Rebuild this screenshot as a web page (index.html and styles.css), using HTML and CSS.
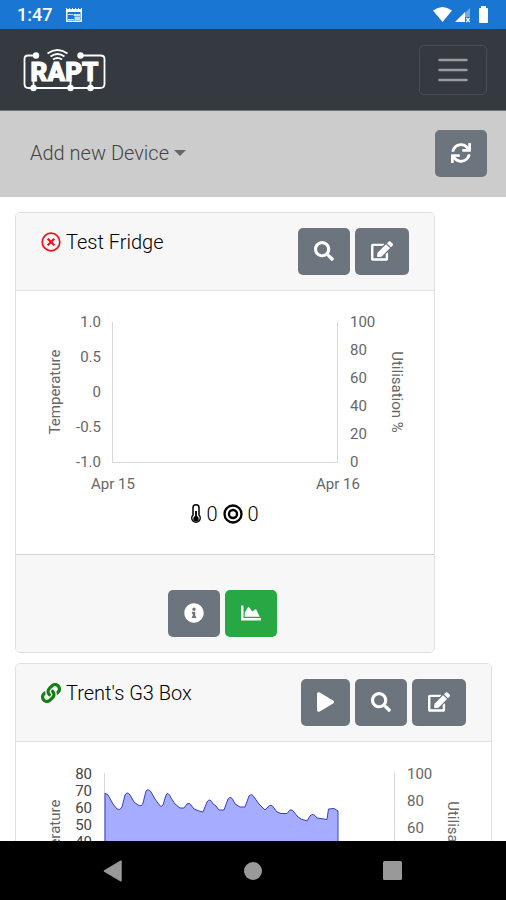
FILE: index.html
```html
<!DOCTYPE html>
<html lang="en">
<head>
<meta charset="utf-8">
<meta name="viewport" content="width=device-width, initial-scale=1">
<title>RAPT</title>
<link rel="stylesheet" href="styles.css">
</head>
<body>
<svg class="sprite" aria-hidden="true">
  <symbol id="search" viewBox="0 0 512 512"><path d="M505 442.7L405.3 343c-4.5-4.5-10.6-7-17-7H372c27.6-35.3 44-79.7 44-128C416 93.1 322.9 0 208 0S0 93.1 0 208s93.1 208 208 208c48.3 0 92.7-16.4 128-44v16.3c0 6.4 2.5 12.5 7 17l99.7 99.7c9.4 9.4 24.6 9.4 33.9 0l28.3-28.3c9.4-9.4 9.4-24.6.1-34zM208 336c-70.7 0-128-57.2-128-128 0-70.7 57.2-128 128-128 70.7 0 128 57.2 128 128 0 70.7-57.2 128-128 128z"/></symbol>
  <symbol id="edit" viewBox="0 0 576 512"><path d="M402.6 83.2l90.2 90.2c3.8 3.8 3.8 10 0 13.8L274.4 405.6l-92.8 10.3c-12.4 1.4-22.9-9.1-21.5-21.5l10.3-92.8L388.8 83.2c3.8-3.8 10-3.8 13.8 0zm162-22.9l-48.8-48.8c-15.2-15.2-39.9-15.2-55.2 0l-35.4 35.4c-3.8 3.8-3.8 10 0 13.8l90.2 90.2c3.8 3.8 10 3.8 13.8 0l35.4-35.4c15.2-15.3 15.2-40 0-55.2zM384 346.2V448H64V128h229.8c3.2 0 6.2-1.3 8.5-3.5l40-40c7.6-7.6 2.2-20.5-8.5-20.5H48C21.5 64 0 85.5 0 112v352c0 26.5 21.5 48 48 48h352c26.5 0 48-21.5 48-48V306.2c0-10.7-12.9-16-20.5-8.5l-40 40c-2.2 2.3-3.5 5.3-3.5 8.5z"/></symbol>
</svg>

<div class="status-bar">
  <span class="clock">1:47</span>
  <svg class="calendar" width="16" height="14" viewBox="0 0 16 14" aria-hidden="true">
    <path fill="#fff" fill-rule="evenodd" d="M0 0h1v1h2V0h1v1h2V0h1v1h2V0h1v1h2V0h1v1h2V0h1v14H0zM1.500 4v8.500h13V4z"/>
    <path fill="#c5dcf6" d="M7.500 6H14v2H7.500zM8.500 8.500H14V12H8.500zM2 6h5v1H2zM2 11h6v1H2z"/>
  </svg>
  <svg class="signals" width="56" height="18" viewBox="0 0 56 18" aria-hidden="true">
    <path fill="#fff" d="M0 4.500Q9.500-2.500 19 4.500L9.500 16z"/>
    <path fill="#73abe6" d="M37 2v9h-5V7z"/>
    <path fill="#fff" d="M22 16L32 6v10z"/>
    <path stroke="#fff" stroke-width="1.300" d="M33.300 12l3.400 4M36.700 12l-3.400 4"/>
    <path fill="#fff" d="M48 0h5v2h1q1 0 1 1v13q0 1-1 1h-7q-1 0-1-1V3q0-1 1-1h1z"/>
  </svg>
</div>

<div class="page">
  <header class="navbar">
    <a class="brand" href="#" aria-label="RAPT home">
      <svg width="84" height="46" viewBox="22 47 84 46">
        <g fill="none" stroke="#fff" stroke-width="1.800">
          <path d="M35 55.500H28q-3.500 0-3.500 3.500V84q0 4 4 4h71.500q4.500 0 4.500-4V59q0-3.500-4-3.500H81"/>
          <path d="M33.500 80v8M70.500 80v8M90.500 80v8"/>
          <path d="M47.500 53.500q10-7 20 0M50.500 56.500q7-5 14 0M53 59.500q4.500-3 9 0"/>
        </g>
        <g fill="#fff">
          <circle cx="36" cy="55.500" r="3.200"/><circle cx="80.500" cy="55.500" r="3.200"/>
          <circle cx="33.500" cy="88" r="3.200"/><circle cx="70.500" cy="88" r="3.200"/><circle cx="90.500" cy="88" r="3.200"/>
          <text class="wordmark" x="64.500" y="81">RAPT</text>
        </g>
      </svg>
    </a>
    <button class="toggler" type="button" aria-label="Toggle navigation">
      <svg width="30" height="24" viewBox="0 0 30 24"><path stroke="#9a9da0" stroke-width="2.400" stroke-linecap="round" d="M1.500 2h27M1.500 12h27M1.500 22h27"/></svg>
    </button>
  </header>

  <div class="toolbar">
    <button class="dropdown" type="button">Add new Device<span class="caret"></span></button>
    <button class="btn" type="button" aria-label="Refresh">
      <svg width="20" height="20" viewBox="0 0 512 512"><path d="M440.650 12.570l4 82.770A247.160 247.160 0 0 0 255.830 8C134.730 8 33.910 94.920 12.290 209.820A12 12 0 0 0 24.090 224h49.050a12 12 0 0 0 11.670-9.260 175.910 175.910 0 0 1 317-56.940l-101.460-4.860a12 12 0 0 0-12.570 12v47.410a12 12 0 0 0 12 12H500a12 12 0 0 0 12-12V12a12 12 0 0 0-12-12h-47.370a12 12 0 0 0-11.980 12.570zM255.830 432a175.610 175.610 0 0 1-146-77.800l101.800 4.870a12 12 0 0 0 12.570-12v-47.400a12 12 0 0 0-12-12H12a12 12 0 0 0-12 12V500a12 12 0 0 0 12 12h47.350a12 12 0 0 0 12-12.600l-4.150-82.570A247.170 247.170 0 0 0 255.830 504c121.110 0 221.930-86.920 243.550-201.820a12 12 0 0 0-11.800-14.180h-49.050a12 12 0 0 0-11.670 9.260A175.860 175.860 0 0 1 255.830 432z"/></svg>
    </button>
  </div>

  <main class="devices">
    <section class="card card-fit">
      <header class="card-header">
        <h2 class="title">
          <svg width="20" height="20" viewBox="0 0 20 20" fill="none" stroke="#f01018" aria-hidden="true"><circle cx="10" cy="10" r="8.800" stroke-width="1.700"/><path stroke-width="2.200" d="M6.700 6.700l6.600 6.600M13.300 6.700l-6.600 6.600"/></svg>
          Test Fridge
        </h2>
        <div class="actions">
          <button class="btn" type="button" aria-label="View"><svg width="20" height="20"><use href="#search"/></svg></button>
          <button class="btn" type="button" aria-label="Edit"><svg width="22" height="20"><use href="#edit"/></svg></button>
        </div>
      </header>
      <div class="card-body">
        <svg class="chart" width="368" height="208" viewBox="41 291 368 208" role="img" aria-label="Temperature and utilisation">
          <path class="axis" d="M112.500 322v140.500h225V322"/>
          <g class="end"><text x="101" y="327">1.0</text><text x="101" y="362">0.5</text><text x="101" y="397">0</text><text x="101" y="432">-0.5</text><text x="101" y="467">-1.0</text></g>
          <g><text x="350" y="327">100</text><text x="350" y="355">80</text><text x="350" y="383">60</text><text x="350" y="411">40</text><text x="350" y="439">20</text><text x="350" y="467">0</text></g>
          <g class="mid"><text x="113" y="489">Apr 15</text><text x="338" y="489">Apr 16</text>
            <text transform="translate(60 392) rotate(-90)">Temperature</text>
            <text transform="translate(392 392) rotate(90)">Utilisation %</text></g>
        </svg>
        <div class="readings">
          <svg width="10" height="20" viewBox="0 0 10 20" aria-hidden="true"><path fill="none" stroke="#000" stroke-width="1.500" d="M2 11V3.800a3 3 0 0 1 6 0V11a4.200 4.200 0 1 1-6 0z"/><path stroke="#000" stroke-width="1.800" d="M5 7v8"/><circle cx="5" cy="14.700" r="2.700"/></svg>
          <span>0</span>
          <svg width="20" height="20" viewBox="0 0 20 20" fill="none" stroke="#000" aria-hidden="true"><circle cx="10" cy="10" r="8.500" stroke-width="2.300"/><circle cx="10" cy="10" r="4" stroke-width="2.400"/></svg>
          <span>0</span>
        </div>
      </div>
      <footer class="card-footer">
        <button class="btn" type="button" aria-label="Information"><svg width="20" height="20" viewBox="0 0 512 512"><path d="M256 8C119.043 8 8 119.083 8 256c0 136.997 111.043 248 248 248s248-111.003 248-248C504 119.083 392.957 8 256 8zm0 110c23.196 0 42 18.804 42 42s-18.804 42-42 42-42-18.804-42-42 18.804-42 42-42zm56 254c0 6.627-5.373 12-12 12h-88c-6.627 0-12-5.373-12-12v-24c0-6.627 5.373-12 12-12h12v-64h-12c-6.627 0-12-5.373-12-12v-24c0-6.627 5.373-12 12-12h64c6.627 0 12 5.373 12 12v100h12c6.627 0 12 5.373 12 12v24z"/></svg></button>
        <button class="btn btn-success" type="button" aria-label="Chart"><svg width="20" height="20" viewBox="0 0 512 512"><path d="M500 384c6.600 0 12 5.400 12 12v40c0 6.600-5.400 12-12 12H12c-6.600 0-12-5.400-12-12V76c0-6.600 5.400-12 12-12h40c6.600 0 12 5.400 12 12v308h436zM372.700 159.500L288 216l-85.300-113.700c-5.100-6.800-15.500-6.300-19.900 1L96 248v104h384l-89.900-187.800c-3.200-6.500-11.400-8.700-17.400-4.700z"/></svg></button>
      </footer>
    </section>

    <section class="card">
      <header class="card-header">
        <h2 class="title">
          <svg width="20" height="20" viewBox="0 0 512 512" fill="#118011" aria-hidden="true"><path d="M326.612 185.391c59.747 59.809 58.927 155.698.36 214.590-.11.12-.24.25-.36.37l-67.200 67.200c-59.270 59.270-155.699 59.262-214.960 0-59.270-59.260-59.270-155.700 0-214.960l37.106-37.106c9.840-9.840 26.786-3.300 27.294 10.606.648 17.722 3.826 35.527 9.690 52.721 1.986 5.822.567 12.262-3.783 16.612l-13.087 13.087c-28.026 28.026-28.905 73.660-1.155 101.960 28.024 28.579 74.086 28.749 102.325.51l67.200-67.190c28.191-28.191 28.073-73.757 0-101.830-3.701-3.694-7.429-6.564-10.341-8.569a16.037 16.037 0 0 1-6.947-12.606c-.396-10.567 3.348-21.456 11.698-29.806l21.054-21.055c5.521-5.521 14.182-6.199 20.584-1.731a152.482 152.482 0 0 1 20.522 17.197zM467.547 44.449c-59.261-59.262-155.690-59.270-214.960 0l-67.200 67.200c-.12.12-.25.25-.36.37-58.566 58.892-59.387 154.781.36 214.590a152.454 152.454 0 0 0 20.521 17.196c6.402 4.468 15.064 3.789 20.584-1.731l21.054-21.055c8.350-8.350 12.094-19.239 11.698-29.806a16.037 16.037 0 0 0-6.947-12.606c-2.912-2.005-6.640-4.875-10.341-8.569-28.073-28.073-28.191-73.639 0-101.830l67.200-67.190c28.239-28.239 74.300-28.069 102.325.51 27.750 28.300 26.872 73.934-1.155 101.960l-13.087 13.087c-4.350 4.350-5.769 10.790-3.783 16.612 5.864 17.194 9.042 34.999 9.690 52.721.509 13.906 17.454 20.446 27.294 10.606l37.106-37.106c59.271-59.259 59.271-155.699.001-214.959z"/></svg>
          Trent's G3 Box
        </h2>
        <div class="actions">
          <button class="btn" type="button" aria-label="Start"><svg width="17" height="20" viewBox="0 0 448 512"><path d="M424.400 214.700L72.400 6.600C43.800-10.300 0 6.100 0 47.900V464c0 37.500 40.700 60.100 72.400 41.300l352-208c31.400-18.500 31.500-64.100 0-82.600z"/></svg></button>
          <button class="btn" type="button" aria-label="View"><svg width="20" height="20"><use href="#search"/></svg></button>
          <button class="btn" type="button" aria-label="Edit"><svg width="22" height="20"><use href="#edit"/></svg></button>
        </div>
      </header>
      <div class="card-body">
        <svg class="chart" width="424" height="208" viewBox="41 741 424 208" role="img" aria-label="Temperature and utilisation">
          <path class="axis" d="M104.500 772v136.500h290V772"/>
          <path class="area" d="M105 908V792L108 794 113 803 117 808Q120 810 122 806L125 794Q127 790 130 794L134 801 138 804Q142 806 143 802L146 790Q148 787 151 791L155 798 160 805Q162 806 163 804L166 794Q168 790 171 797L175 803 180 807H184L187 803Q189 801 191 804L194 808 199 810 203 811 207 801Q210 796 213 803L216 805 219 809H224L228 798Q231 793 235 803L240 806H245L249 795Q252 792 254 796L259 803 265 809 268 806Q271 802 274 807L277 811 281 812.500H287L290 809Q292 808 294 811L297 815 301 818 307 820 310 815Q313 811 317 817L327 818.500 328.500 808 334 807.500 338 810V908z"/>
          <g class="end dark"><text x="92" y="778">80</text><text x="92" y="795">70</text><text x="92" y="812">60</text><text x="92" y="829">50</text><text x="92" y="846">40</text></g>
          <g><text x="407" y="778">100</text><text x="407" y="805">80</text><text x="407" y="832">60</text></g>
          <g class="mid"><text transform="translate(60 841) rotate(-90)">Temperature</text>
            <text transform="translate(448 841) rotate(90)">Utilisation %</text></g>
        </svg>
      </div>
    </section>
  </main>
</div>

<nav class="system-nav" aria-label="System">
  <button type="button" aria-label="Back"><svg width="20" height="22" viewBox="0 0 20 22"><path d="M18 1.200v19.600L1.500 11z" stroke="#999" stroke-width="1.500" stroke-linejoin="round"/></svg></button>
  <button type="button" aria-label="Home"><svg width="20" height="20" viewBox="0 0 20 20"><circle cx="10" cy="10" r="9"/></svg></button>
  <button type="button" aria-label="Recent apps"><svg width="20" height="20" viewBox="0 0 20 20"><rect x="0" y="0" width="19" height="19" rx="1.500"/></svg></button>
</nav>
</body>
</html>
```
FILE: styles.css
```css
* { box-sizing: border-box; }

body {
  margin: 0;
  height: 100vh;
  display: flex;
  flex-direction: column;
  overflow: hidden;
  background: #fff;
  color: #000;
  font-family: Roboto, "Liberation Sans", sans-serif;
  font-size: 20px;
  font-weight: 300;
  line-height: 30px;
}

svg { display: block; flex: none; }
button { font: inherit; cursor: pointer; }
.sprite { position: absolute; width: 0; height: 0; }

.status-bar {
  flex: none;
  display: flex;
  align-items: center;
  height: 29px;
  padding: 0 17px;
  background: #1976d2;
  color: #fff;
}
.clock { font-size: 18px; font-weight: 500; }
.calendar { margin-left: 14px; }
.signals { margin-left: auto; }

.page { flex: 1; min-height: 0; overflow: hidden; }

.navbar {
  display: flex;
  align-items: center;
  justify-content: space-between;
  padding: 16px 19px 15px 22px;
  background: #343a40;
  border-bottom: 1px solid #6c757d;
}
.wordmark {
  font-family: Roboto, "Liberation Sans", sans-serif;
  font-size: 26px;
  font-weight: 900;
  text-anchor: middle;
  stroke: #fff;
  stroke-width: 1px;
}
.toggler {
  padding: 12px 18px;
  background: transparent;
  border: 1px solid #484e53;
  border-radius: 5px;
}

.toolbar {
  display: flex;
  align-items: center;
  justify-content: space-between;
  padding: 19px 19px 20px 30px;
  background: #ccc;
}
.dropdown {
  display: flex;
  align-items: center;
  gap: 5px;
  padding: 0 0 2px;
  background: none;
  border: 0;
  color: #444;
}
.caret {
  border: 6px solid transparent;
  border-top-color: #666;
  border-bottom: 0;
}

.btn {
  display: flex;
  align-items: center;
  height: 47px;
  padding: 0 16px 2px;
  background: #6c757d;
  border: 0;
  border-radius: 5px;
  fill: #fff;
}
.btn-success { background: #28a745; }

.devices {
  display: flex;
  flex-direction: column;
  gap: 10px;
  padding: 15px 14px 15px 15px;
}
.card {
  background: #fff;
  border: 1px solid #dfdfdf;
  border-radius: 5px;
}
.card-fit { align-self: flex-start; }
.card-header {
  display: flex;
  justify-content: space-between;
  padding: 15px 25px;
  background: #f7f7f7;
  border-bottom: 1px solid #dfdfdf;
  border-radius: 4px 4px 0 0;
}
.title {
  display: flex;
  align-items: center;
  gap: 5px;
  height: 27px;
  margin: 0;
  font-size: 20px;
  font-weight: inherit;
}
.actions { display: flex; gap: 5px; }
.card-body { padding: 0 25px 25px; }
.chart { max-width: 100%; }
.chart text { font-size: 15px; font-weight: 400; fill: #666; }
.chart .dark text { fill: #444; }
.end { text-anchor: end; }
.mid { text-anchor: middle; }
.axis { fill: none; stroke: #d8d8d8; }
.area { fill: #a6acff; stroke: #3440c8; stroke-width: 1; }
.readings {
  display: flex;
  align-items: center;
  justify-content: center;
  gap: 5px;
}
.card-footer {
  display: flex;
  justify-content: center;
  gap: 5px;
  padding: 35px 30px 15px 25px;
  background: #f7f7f7;
  border-top: 1px solid #d2d2d2;
  border-radius: 0 0 4px 4px;
}

.system-nav {
  flex: none;
  display: flex;
  align-items: center;
  justify-content: center;
  gap: 120px;
  height: 59px;
  background: #000;
}
.system-nav button { padding: 0; background: none; border: 0; fill: #999; }
```
